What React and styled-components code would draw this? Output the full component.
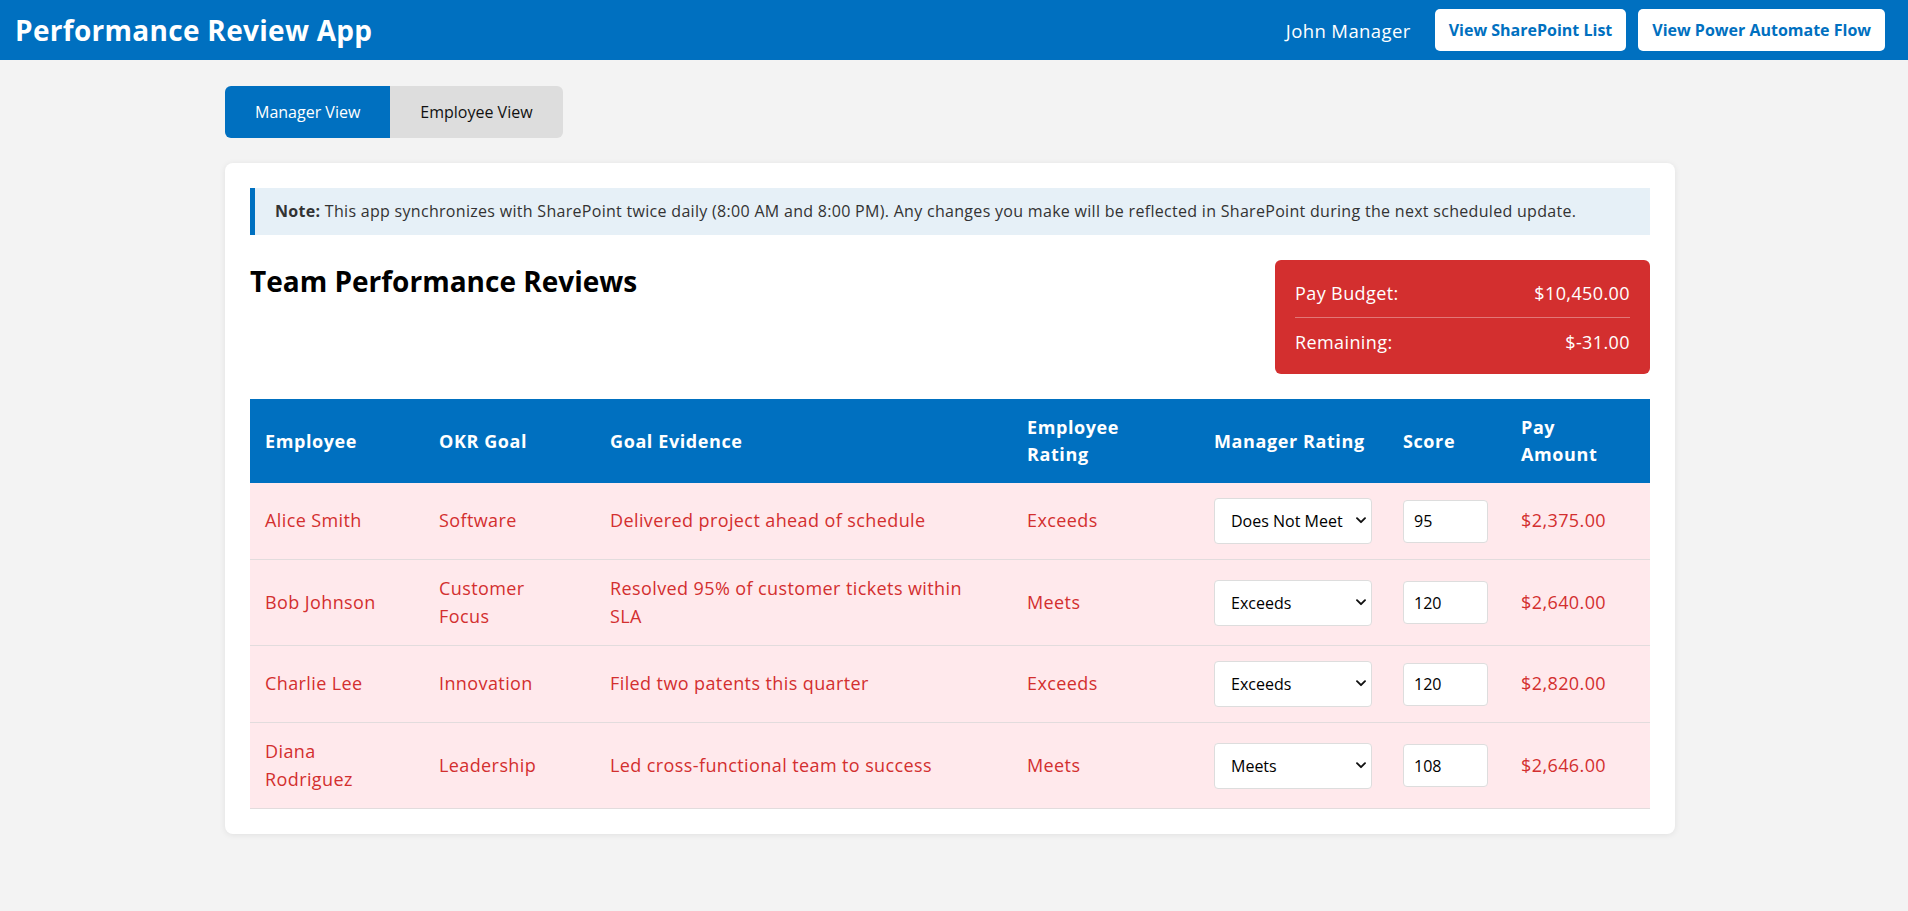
import React from "react";
import styled, { createGlobalStyle } from "styled-components";

const GlobalStyle = createGlobalStyle`
  * { box-sizing: border-box; }
  body {
    margin: 0;
    background: #f3f3f3;
    font-family: "Segoe UI", "Open Sans", sans-serif;
    letter-spacing: 0.025em;
    color: #222;
  }
`;

const BLUE = "#0070c0";
const RED = "#d32f2f";

const Header = styled.header`
  height: 60px;
  background: ${BLUE};
  display: flex;
  align-items: center;
  justify-content: space-between;
  padding: 0 23px 0 15px;
`;

const AppTitle = styled.h1`
  margin: 0;
  color: #fff;
  font-size: 28px;
  font-weight: 700;
  letter-spacing: 0.3px;
`;

const HeaderRight = styled.div`
  display: flex;
  align-items: center;
  gap: 12px;
`;

const UserName = styled.span`
  color: #fff;
  font-size: 18.5px;
  margin-right: 12px;
`;

const HeaderButton = styled.button`
  height: 42px;
  padding: 0 14px;
  background: #fff;
  color: ${BLUE};
  border: none;
  border-radius: 5px;
  font-family: inherit;
  font-size: 16px;
  font-weight: 700;
  letter-spacing: 0;
  cursor: pointer;
`;

const Page = styled.div`
  padding: 26px 8px 40px 0;
`;

const Container = styled.main`
  width: 1450px;
  margin: 0 auto;
`;

const Tabs = styled.div`
  display: flex;
`;

const Tab = styled.button`
  height: 52px;
  padding: 0 30px;
  border: none;
  font-family: inherit;
  font-size: 16px;
  letter-spacing: 0;
  background: ${(p) => (p.$active ? BLUE : "#dddddd")};
  color: ${(p) => (p.$active ? "#fff" : "#111")};
  cursor: pointer;
  &:first-child { border-radius: 6px 0 0 6px; }
  &:last-child { border-radius: 0 6px 6px 0; }
`;

const Card = styled.section`
  margin-top: 25px;
  background: #fff;
  border-radius: 8px;
  padding: 25px;
  box-shadow: 0 1px 6px rgba(0, 0, 0, 0.08);
`;

const Note = styled.div`
  background: #e6f0f7;
  border-left: 5px solid ${BLUE};
  padding: 12px 20px;
  font-size: 16px;
  line-height: 23px;
  color: #333;
  letter-spacing: 0.3px;
  strong { font-weight: 700; }
`;

const SectionHead = styled.div`
  display: flex;
  justify-content: space-between;
  align-items: flex-start;
  margin-top: 25px;
`;

const SectionTitle = styled.h2`
  margin: 0;
  font-size: 28px;
  line-height: 42px;
  font-weight: 700;
  color: #000;
  letter-spacing: 0;
`;

const BudgetBox = styled.div`
  width: 375px;
  background: ${RED};
  color: #fff;
  border-radius: 6px;
  padding: 20px 20px 18px;
  font-size: 18px;
  line-height: 27px;
`;

const BudgetRow = styled.div`
  display: flex;
  justify-content: space-between;
  padding: ${(p) => (p.$first ? "0 0 10px" : "11px 0 0")};
  border-bottom: ${(p) => (p.$first ? "1px solid rgba(255,255,255,0.35)" : "none")};
`;

const Table = styled.table`
  width: 100%;
  margin-top: 25px;
  border-collapse: collapse;
  table-layout: fixed;
`;

const Th = styled.th`
  background: ${BLUE};
  color: #fff;
  text-align: left;
  font-size: 18px;
  font-weight: 700;
  line-height: 27px;
  padding: 15px ${(p) => p.$padRight}px 15px 15px;
  letter-spacing: 0.6px;
`;

const Tr = styled.tr`
  background: #ffe9ec;
`;

const Td = styled.td`
  padding: 15px ${(p) => p.$padRight}px 15px 15px;
  font-size: 18px;
  line-height: 27.5px;
  color: ${RED};
  border-bottom: 1px solid #e2dcdd;
  vertical-align: middle;
`;

const SelectWrap = styled.div`
  position: relative;
  width: 158px;
  height: 46px;
`;

const Select = styled.select`
  appearance: none;
  -webkit-appearance: none;
  width: 100%;
  height: 100%;
  padding: 0 24px 0 16px;
  border: 1px solid #ddd;
  border-radius: 4px;
  background: #fff;
  font-family: inherit;
  font-size: 16px;
  letter-spacing: 0;
  color: #000;
`;

const Chevron = styled.svg`
  position: absolute;
  right: 6px;
  top: 19px;
  width: 10px;
  height: 7px;
  pointer-events: none;
`;

const ScoreInput = styled.input`
  width: 85px;
  height: 43px;
  padding: 0 10px;
  border: 1px solid #ddd;
  border-radius: 4px;
  background: #fff;
  font-family: inherit;
  font-size: 16px;
  letter-spacing: 0;
  color: #000;
  -moz-appearance: textfield;
  &::-webkit-inner-spin-button,
  &::-webkit-outer-spin-button { -webkit-appearance: none; margin: 0; }
`;

const columns = [
  { label: "Employee", width: 174, body: 25, head: 15 },
  { label: "OKR Goal", width: 171, body: 25, head: 15 },
  { label: "Goal Evidence", width: 417, body: 15, head: 15 },
  { label: "Employee Rating", width: 187, body: 15, head: 50 },
  { label: "Manager Rating", width: 189, body: 15, head: 15 },
  { label: "Score", width: 118, body: 15, head: 15 },
  { label: "Pay Amount", width: 144, body: 15, head: 35 },
];

const rows = [
  { name: "Alice Smith", goal: "Software", evidence: "Delivered project ahead of schedule", self: "Exceeds", mgr: "Does Not Meet", score: "95", pay: "$2,375.00" },
  { name: "Bob Johnson", goal: "Customer Focus", evidence: "Resolved 95% of customer tickets within SLA", self: "Meets", mgr: "Exceeds", score: "120", pay: "$2,640.00" },
  { name: "Charlie Lee", goal: "Innovation", evidence: "Filed two patents this quarter", self: "Exceeds", mgr: "Exceeds", score: "120", pay: "$2,820.00" },
  { name: "Diana Rodriguez", goal: "Leadership", evidence: "Led cross-functional team to success", self: "Meets", mgr: "Meets", score: "108", pay: "$2,646.00" },
];

function RatingSelect({ value }) {
  return (
    <SelectWrap>
      <Select defaultValue={value}>
        <option>Does Not Meet</option>
        <option>Meets</option>
        <option>Exceeds</option>
      </Select>
      <Chevron viewBox="0 0 10 7" fill="none">
        <path d="M1 1.2 L5 5.2 L9 1.2" stroke="#111" strokeWidth="1.9" strokeLinecap="round" strokeLinejoin="round" />
      </Chevron>
    </SelectWrap>
  );
}

export default function App() {
  return (
    <>
      <GlobalStyle />
      <Header>
        <AppTitle>Performance Review App</AppTitle>
        <HeaderRight>
          <UserName>John Manager</UserName>
          <HeaderButton>View SharePoint List</HeaderButton>
          <HeaderButton>View Power Automate Flow</HeaderButton>
        </HeaderRight>
      </Header>
      <Page>
        <Container>
          <Tabs>
            <Tab $active>Manager View</Tab>
            <Tab>Employee View</Tab>
          </Tabs>
          <Card>
            <Note>
              <strong>Note:</strong> This app synchronizes with SharePoint twice daily (8:00 AM and 8:00 PM). Any changes you make will be reflected in SharePoint during the next scheduled update.
            </Note>
            <SectionHead>
              <SectionTitle>Team Performance Reviews</SectionTitle>
              <BudgetBox>
                <BudgetRow $first>
                  <span>Pay Budget:</span>
                  <span>$10,450.00</span>
                </BudgetRow>
                <BudgetRow>
                  <span>Remaining:</span>
                  <span>$-31.00</span>
                </BudgetRow>
              </BudgetBox>
            </SectionHead>
            <Table>
              <colgroup>
                {columns.map((c) => (
                  <col key={c.label} style={{ width: c.width }} />
                ))}
              </colgroup>
              <thead>
                <tr>
                  {columns.map((c) => (
                    <Th key={c.label} $padRight={c.head}>{c.label}</Th>
                  ))}
                </tr>
              </thead>
              <tbody>
                {rows.map((r) => (
                  <Tr key={r.name}>
                    <Td $padRight={columns[0].body}>{r.name}</Td>
                    <Td $padRight={columns[1].body}>{r.goal}</Td>
                    <Td $padRight={columns[2].body}>{r.evidence}</Td>
                    <Td $padRight={columns[3].body}>{r.self}</Td>
                    <Td $padRight={columns[4].body}>
                      <RatingSelect value={r.mgr} />
                    </Td>
                    <Td $padRight={columns[5].body}>
                      <ScoreInput type="number" defaultValue={r.score} />
                    </Td>
                    <Td $padRight={columns[6].body}>{r.pay}</Td>
                  </Tr>
                ))}
              </tbody>
            </Table>
          </Card>
        </Container>
      </Page>
    </>
  );
}
